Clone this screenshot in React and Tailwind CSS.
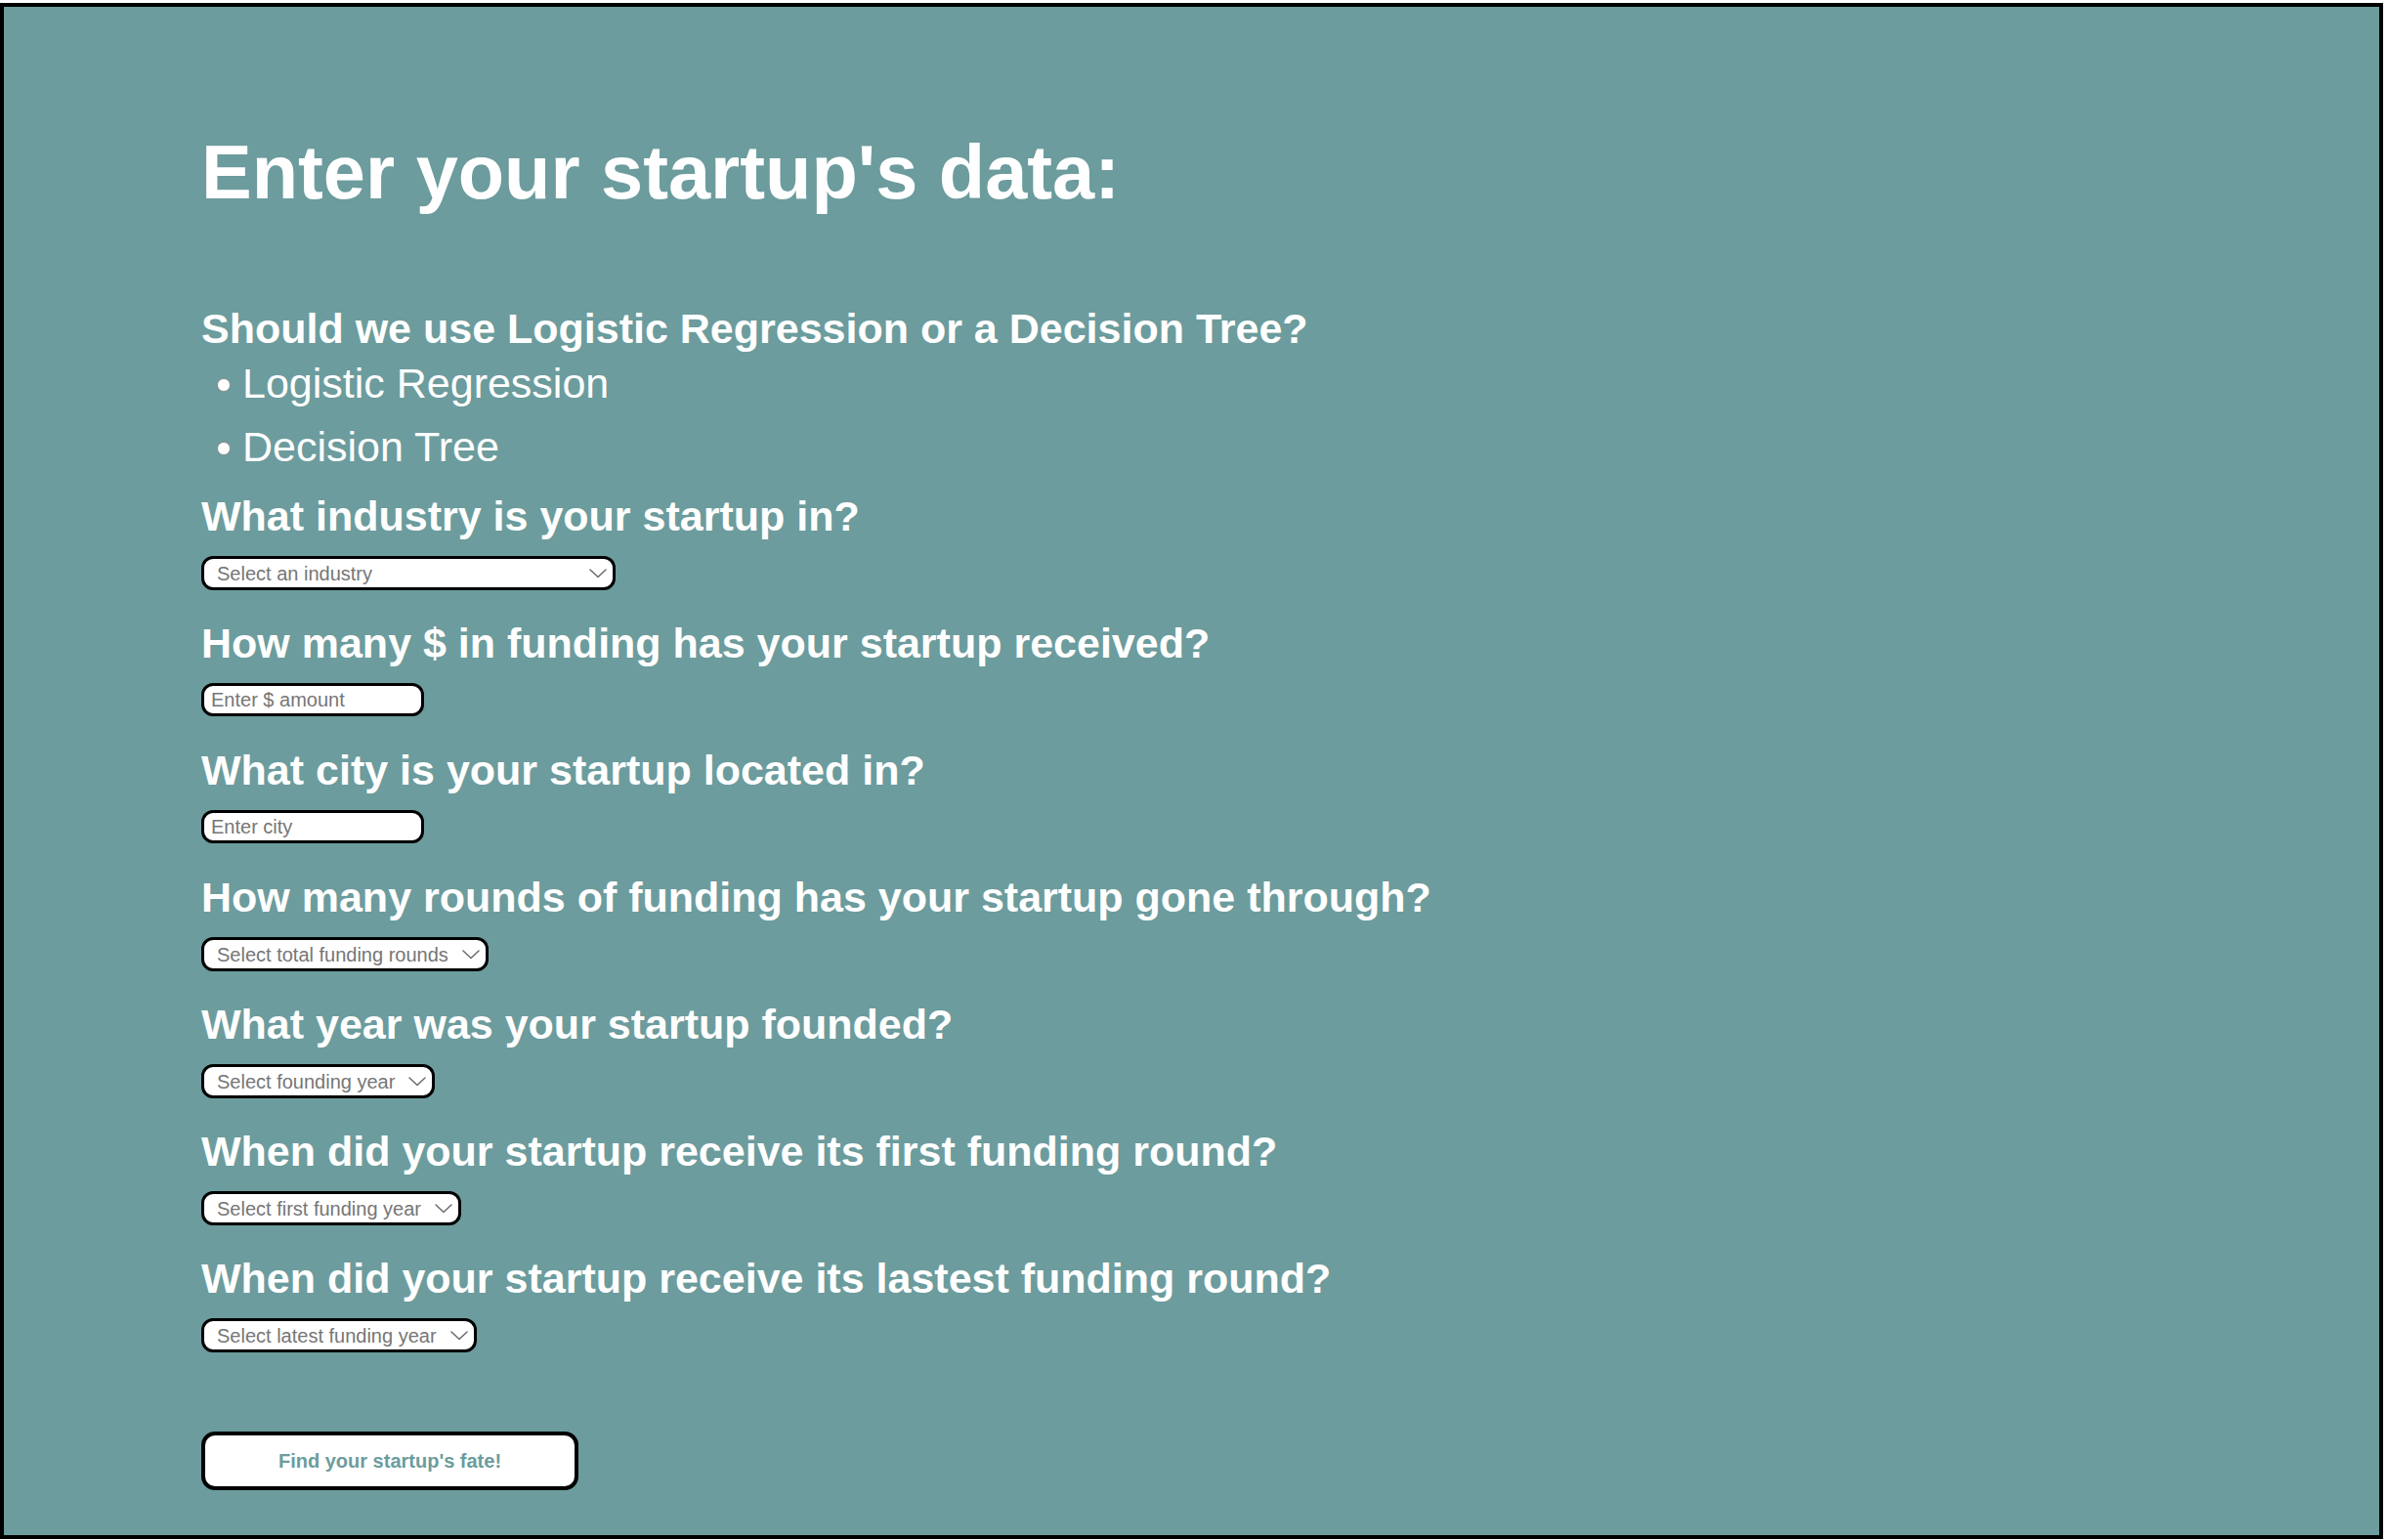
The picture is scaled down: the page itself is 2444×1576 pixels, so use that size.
import React from "react";

const Chevron = () => (
  <svg
    className="pointer-events-none absolute right-[9px] top-1/2 -translate-y-1/2"
    width="18"
    height="10"
    viewBox="0 0 18 10"
    fill="none"
  >
    <polyline points="1,1 9,8.5 17,1" stroke="#6b6b6b" strokeWidth="1.5" strokeLinejoin="round" strokeLinecap="round" />
  </svg>
);

const SelectBox = ({ width, label }) => (
  <div className="relative w-fit">
    <select
      defaultValue=""
      className={`block appearance-none h-[35px] ${width} border-[3px] border-black rounded-[12px] bg-white pl-[13px] pr-[30px] text-[20px] leading-[24px] text-[#767676] outline-none [font-family:'Liberation_Sans',Arial,sans-serif]`}
    >
      <option value="" disabled>
        {label}
      </option>
    </select>
    <Chevron />
  </div>
);

const InputBox = ({ placeholder }) => (
  <input
    type="text"
    placeholder={placeholder}
    className="block h-[34px] w-[228px] border-[3px] border-black rounded-[12px] bg-white pl-[7px] text-[20px] text-black placeholder:text-[#767676] outline-none [font-family:'Liberation_Sans',Arial,sans-serif]"
  />
);

const Block = ({ question, children }) => (
  <div className="h-[130px]">
    <h2 className="text-[43px] leading-[48px] font-bold text-white whitespace-nowrap">{question}</h2>
    <div className="mt-[17px]">{children}</div>
  </div>
);

export default function App() {
  return (
    <div className="min-h-[1576px] bg-white pt-[3px] pr-[5px] [font-family:'Liberation_Sans',Arial,sans-serif]">
      <div className="h-[1572px] border-4 border-black bg-[#6c9c9d] pl-[202px] pt-[131px]">
        <h1 className="text-[77.5px] leading-[77px] font-bold text-white whitespace-nowrap">
          Enter your startup's data:
        </h1>

        <h2 className="mt-[97px] text-[43px] leading-[48px] font-bold text-white whitespace-nowrap">
          Should we use Logistic Regression or a Decision Tree?
        </h2>
        <ul className="ml-[16px]">
          {["Logistic Regression", "Decision Tree"].map((t) => (
            <li key={t} className="flex items-center h-[65px] text-[43px] leading-[65px] text-white">
              <span className="mt-[3px] mr-[12px] inline-block h-[14px] w-[14px] rounded-full bg-white border border-[#8c8c8c]" />
              <span>{t}</span>
            </li>
          ))}
        </ul>

        <div className="mt-[14px]">
          <Block question="What industry is your startup in?">
            <SelectBox width="w-[424px]" label="Select an industry" />
          </Block>
          <Block question="How many $ in funding has your startup received?">
            <InputBox placeholder="Enter $ amount" />
          </Block>
          <Block question="What city is your startup located in?">
            <InputBox placeholder="Enter city" />
          </Block>
          <Block question="How many rounds of funding has your startup gone through?">
            <SelectBox width="w-[294px]" label="Select total funding rounds" />
          </Block>
          <Block question="What year was your startup founded?">
            <SelectBox width="w-[239px]" label="Select founding year" />
          </Block>
          <Block question="When did your startup receive its first funding round?">
            <SelectBox width="w-[266px]" label="Select first funding year" />
          </Block>
          <Block question="When did your startup receive its lastest funding round?">
            <SelectBox width="w-[282px]" label="Select latest funding year" />
          </Block>
        </div>

        <button
          type="button"
          className="mt-[51px] block h-[60px] w-[386px] border-4 border-black rounded-[14px] bg-white text-[20px] font-bold text-[#6c9c9d] [font-family:'Liberation_Sans',Arial,sans-serif]"
        >
          Find your startup's fate!
        </button>
      </div>
    </div>
  );
}
